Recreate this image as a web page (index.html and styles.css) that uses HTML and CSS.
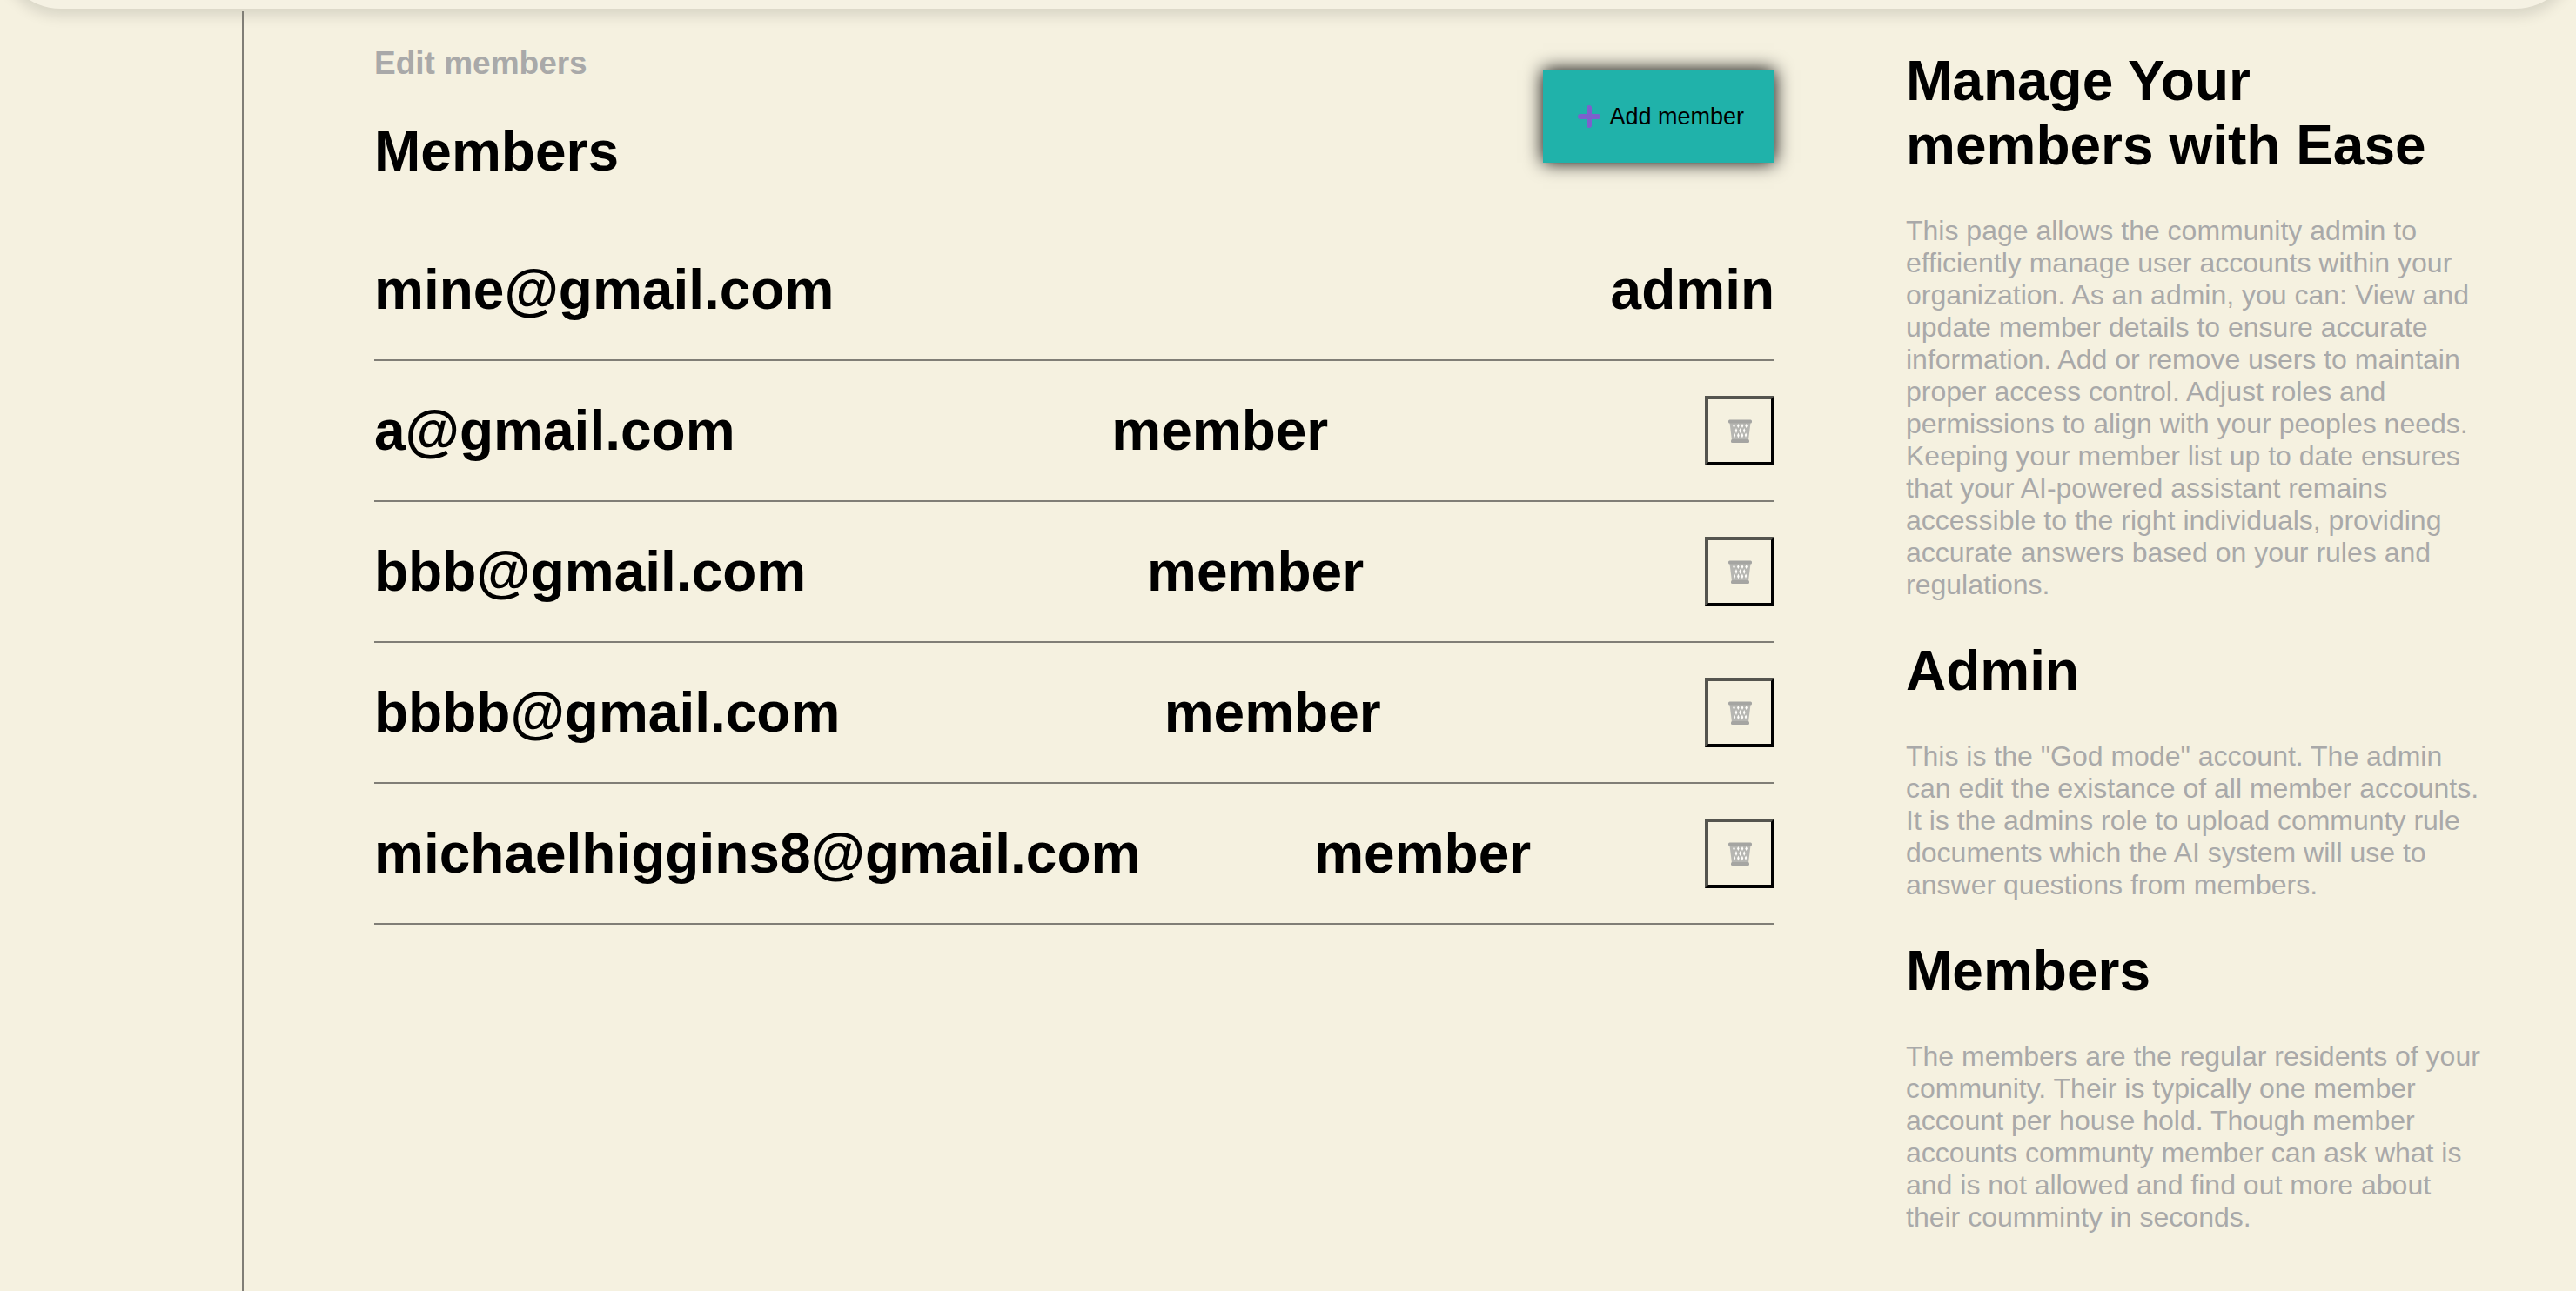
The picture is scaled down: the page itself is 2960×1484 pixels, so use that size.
FILE: index.html
```html
<!DOCTYPE html>
<html lang="en">
<head>
<meta charset="utf-8">
<title>Edit members</title>
<link rel="stylesheet" href="styles.css">
</head>
<body>
<svg class="sprite" aria-hidden="true">
  <symbol id="basket" viewBox="0 0 27 28">
    <path d="M1.500 4 4 24H23L25.500 4Z" fill="#b6b6b2"/>
    <path d="M6.500 5l1.300 2.500-1.200 2.500L5.200 7.500ZM11.300 5l1.300 2.500-1.300 2.500-1.300-2.500ZM16 5l1.300 2.500-1.300 2.500-1.300-2.500ZM20.700 5l1.200 2.500-1.400 2.500-1.200-2.500ZM9 10l1.300 3L9 16 7.700 13ZM13.600 10l1.300 3-1.300 3-1.300-3ZM18.200 10l1.300 3-1.300 3-1.300-3ZM7 15.500l1.200 2.800L7.200 21 6 18ZM11.400 15.500l1.300 3-1.300 3-1.300-3ZM15.900 15.500l1.300 3-1.300 3-1.300-3ZM20.200 15.500l1 2.500-1.200 3-1.200-3Z" fill="#fffefa"/>
    <rect x="0" y="0.500" width="27" height="4" rx="1.500" fill="#a5a5a2"/>
    <rect x="3" y="23" width="21" height="4" rx="1.500" fill="#a5a5a2"/>
  </symbol>
</svg>
<header class="topbar"></header>
<div class="layout">
  <nav class="sidebar" aria-label="Sections"></nav>
  <main class="content">
    <section class="members">
      <div class="members-head">
        <div class="titles">
          <h3 class="eyebrow">Edit members</h3>
          <h1 class="heading">Members</h1>
        </div>
        <button class="add" type="button">
          <svg class="plus" viewBox="0 0 33 33" aria-hidden="true"><path d="M17 6V26M7 16H27" fill="none" stroke="#7d60cc" stroke-width="6" stroke-linecap="round"/></svg>
          Add member
        </button>
      </div>
      <ul class="list">
        <li class="row"><span>mine@gmail.com</span><span>admin</span></li>
        <li class="row"><span>a@gmail.com</span><span>member</span><button class="remove" type="button" aria-label="Remove a@gmail.com"><svg class="bin"><use href="#basket"/></svg></button></li>
        <li class="row"><span>bbb@gmail.com</span><span>member</span><button class="remove" type="button" aria-label="Remove bbb@gmail.com"><svg class="bin"><use href="#basket"/></svg></button></li>
        <li class="row"><span>bbbb@gmail.com</span><span>member</span><button class="remove" type="button" aria-label="Remove bbbb@gmail.com"><svg class="bin"><use href="#basket"/></svg></button></li>
        <li class="row"><span>michaelhiggins8@gmail.com</span><span>member</span><button class="remove" type="button" aria-label="Remove michaelhiggins8@gmail.com"><svg class="bin"><use href="#basket"/></svg></button></li>
      </ul>
    </section>
    <aside class="help">
      <h2 class="heading">Manage Your members with Ease</h2>
      <p class="note">This page allows the community admin to efficiently manage user accounts within your organization. As an admin, you can: View and update member details to ensure accurate information. Add or remove users to maintain proper access control. Adjust roles and permissions to align with your peoples needs. Keeping your member list up to date ensures that your AI-powered assistant remains accessible to the right individuals, providing accurate answers based on your rules and regulations.</p>
      <h2 class="heading">Admin</h2>
      <p class="note">This is the "God mode" account. The admin can edit the existance of all member accounts. It is the admins role to upload communty rule documents which the AI system will use to answer questions from members.</p>
      <h2 class="heading">Members</h2>
      <p class="note">The members are the regular residents of your community. Their is typically one member account per house hold. Though member accounts communty member can ask what is and is not allowed and find out more about their coumminty in seconds.</p>
    </aside>
  </main>
</div>
</body>
</html>
```
FILE: styles.css
```css
* {
  box-sizing: border-box;
}

body {
  margin: 0;
  min-height: 100vh;
  display: flex;
  flex-direction: column;
  gap: 3px;
  background: #f5f1e0;
  color: #000;
  font-family: "Liberation Sans", Arial, sans-serif;
  font-size: 32px;
  line-height: 37px;
}

h1, h2, h3, p, ul {
  margin: 0;
}

.sprite {
  position: absolute;
  width: 0;
  height: 0;
}

/* Only the lower edge of the rounded bar is in view. */
.topbar {
  height: 80px;
  margin-top: -70px;
  border-radius: 0 0 70px 70px;
  background: #f5f1e3;
  box-shadow: 0 8px 16px rgba(0, 0, 0, 0.12);
}

.layout {
  flex: 1;
  display: grid;
  grid-template-columns: 280px 1fr;
}

.sidebar {
  border-right: 2px solid #807e76;
}

.content {
  display: grid;
  grid-template-columns: 1609fr 670fr;
  gap: 151px;
  padding: 0 100px 0 150px;
}

.heading {
  font-size: 64px;
  line-height: 74px;
}

.members-head {
  display: flex;
  justify-content: space-between;
  align-items: center;
}

.titles {
  display: flex;
  flex-direction: column;
  gap: 43px;
  padding: 38px 0 42px;
}

.eyebrow {
  color: #a9a9a9;
  font-size: 37px;
  line-height: 43px;
}

.add {
  display: flex;
  align-items: center;
  gap: 7px;
  height: 107px;
  padding: 2px 35px 0 36px;
  border: 0;
  background: #20b2aa;
  box-shadow: 0 0 20px #000;
  color: #000;
  font: inherit;
  font-size: 27px;
}

.plus {
  width: 33px;
  height: 33px;
}

.list {
  padding: 0;
  list-style: none;
}

.row {
  display: flex;
  justify-content: space-between;
  align-items: center;
  height: 162px;
  border-bottom: 2px solid #807e76;
  font-size: 64px;
  font-weight: bold;
  line-height: 74px;
}

.remove {
  display: grid;
  place-items: center;
  width: 80px;
  height: 80px;
  padding: 2px 0 0;
  border: 4px solid;
  border-color: #55554f #000 #000 #55554f;
  background: none;
}

.bin {
  width: 27px;
  height: 28px;
}

.help {
  display: flex;
  flex-direction: column;
  gap: 43px;
  padding: 43px 0;
}

.note {
  color: #a9a9a9;
}
```
